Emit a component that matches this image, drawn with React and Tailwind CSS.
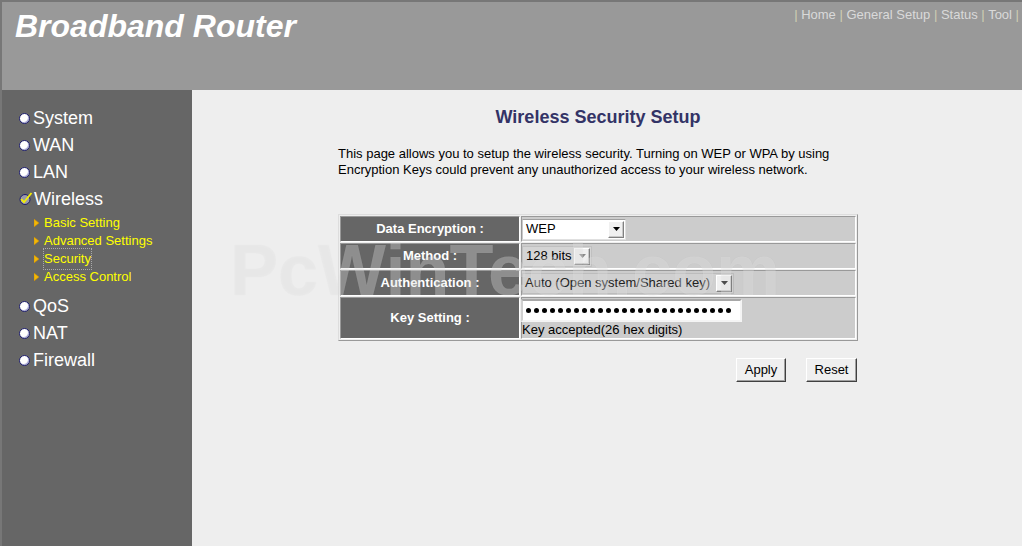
function Bullet() {
  return (
    <span className="w-[11px] h-[11px] rounded-full bg-white border border-[#1c1c6c] shadow-[inset_-1px_-1px_0_#b0b0d8] shrink-0" />
  );
}

function CheckBullet() {
  return (
    <svg width="14" height="14" viewBox="0 0 14 14" className="shrink-0 -mr-[2px] -mt-[3px]">
      <circle cx="6" cy="8.5" r="5" fill="#9a9aa8" stroke="#1c1c6c" strokeWidth="1" />
      <path d="M2.2 8.2 L5 11.2 L12.5 2" fill="none" stroke="#f5f000" strokeWidth="1.8" />
    </svg>
  );
}

function SubArrow() {
  return (
    <svg width="5" height="8" viewBox="0 0 5 8" className="shrink-0">
      <polygon points="0,0 5,4 0,8" fill="#f2b707" stroke="#c88a00" strokeWidth="0.5" />
    </svg>
  );
}

function MainItem({ label, check }) {
  return (
    <div className="h-[27px] flex items-center pl-[17px] gap-[3px] text-[18px] text-white">
      {check ? <CheckBullet /> : <Bullet />}
      <span>{label}</span>
    </div>
  );
}

function SubItem({ label, focus }) {
  return (
    <div className="h-[18px] flex items-center pl-[32px] gap-[5px] text-[13px] text-[#ffff00]">
      <SubArrow />
      <span className={focus ? "outline outline-1 outline-dotted outline-[#aaaaaa]" : ""}>{label}</span>
    </div>
  );
}

function DropButton({ dim }) {
  return (
    <span className="w-[16px] h-[17px] mr-[1px] flex items-center justify-center bg-[#f0f0f0] border border-t-white border-l-white border-b-[#808080] border-r-[#808080] shadow-[inset_-1px_-1px_0_#c8c8c8]">
      <svg width="7" height="4" viewBox="0 0 7 4">
        <polygon points="0,0 7,0 3.5,4" fill={dim ? "#8a8a8a" : "#000000"} />
      </svg>
    </span>
  );
}

export default function App() {
  return (
    <div className="relative w-[1022px] h-[546px] overflow-hidden flex flex-col bg-[#eeeeee] font-['Liberation_Sans',Arial,sans-serif]">
      <header className="h-[90px] shrink-0 bg-[#999999] border-t-2 border-l-2 border-[#777777] flex justify-between">
        <h1 className="pl-[13px] pt-[8px] text-[32px] leading-none font-bold italic text-white">Broadband Router</h1>
        <nav className="pt-[5px] pr-[3px] text-[13px] leading-[16px] text-[#d9d9d9] whitespace-pre">
          <span className="text-[#cfcfb4]">|</span> Home <span className="text-[#cfcfb4]">|</span> General Setup{" "}
          <span className="text-[#cfcfb4]">|</span> Status <span className="text-[#cfcfb4]">|</span> Tool{" "}
          <span className="text-[#cfcfb4]">|</span>
        </nav>
      </header>

      <div className="flex flex-1">
        <aside className="w-[192px] shrink-0 bg-[#666666] border-l-2 border-[#777777] pt-[15px]">
          <MainItem label="System" />
          <MainItem label="WAN" />
          <MainItem label="LAN" />
          <MainItem label="Wireless" check />
          <div className="pt-[1px]">
            <SubItem label="Basic Setting" />
            <SubItem label="Advanced Settings" />
            <SubItem label="Security" focus />
            <SubItem label="Access Control" />
          </div>
          <div className="mt-[7px]">
            <MainItem label="QoS" />
            <MainItem label="NAT" />
            <MainItem label="Firewall" />
          </div>
        </aside>

        <main className="flex-1 pt-[16px] pl-[146px]">
          <div className="w-[520px]">
            <h2 className="text-center text-[18px] leading-[22px] font-bold text-[#333366]">Wireless Security Setup</h2>
            <p className="mt-[18px] text-[13px] leading-[16px] text-black">
              This page allows you to setup the wireless security. Turning on WEP or WPA by using Encryption Keys could
              prevent any unauthorized access to your wireless network.
            </p>

            <table className="mt-[36px] w-[520px] table-fixed border-separate border-spacing-[1px] border border-t-[#dddddd] border-l-[#dddddd] border-b-[#999999] border-r-[#999999]">
              <tbody>
                <tr>
                  <td className="w-[180px] p-0 bg-[#666666] border border-t-[#999999] border-l-[#999999] border-b-white border-r-white text-center text-[13px] font-bold text-white">
                    <div className="h-[24px] flex items-center justify-center">Data Encryption :</div>
                  </td>
                  <td className="p-0 bg-[#cccccc] border border-t-[#999999] border-l-[#999999] border-b-white border-r-white">
                    <div className="h-[24px] flex items-center">
                      <div className="w-[104px] h-[21px] flex items-center justify-between bg-white border border-t-[#a0a0a0] border-l-[#c8c8c8] border-b-[#e0e0e0] border-r-[#e0e0e0]">
                        <span className="pl-[3px] text-[13px] text-black">WEP</span>
                        <DropButton />
                      </div>
                    </div>
                  </td>
                </tr>
                <tr>
                  <td className="p-0 bg-[#666666] border border-t-[#999999] border-l-[#999999] border-b-white border-r-white text-center text-[13px] font-bold text-white">
                    <div className="h-[24px] flex items-center justify-center">Method :</div>
                  </td>
                  <td className="p-0 bg-[#cccccc] border border-t-[#999999] border-l-[#999999] border-b-white border-r-white">
                    <div className="h-[24px] flex items-center">
                      <div className="w-[70px] h-[21px] flex items-center justify-between bg-[#d4d4d4] border border-[#c0c0c0]">
                        <span className="pl-[3px] text-[13px] text-black">128 bits</span>
                        <DropButton dim />
                      </div>
                    </div>
                  </td>
                </tr>
                <tr>
                  <td className="p-0 bg-[#666666] border border-t-[#999999] border-l-[#999999] border-b-white border-r-white text-center text-[13px] font-bold text-white">
                    <div className="h-[24px] flex items-center justify-center">Authentication :</div>
                  </td>
                  <td className="p-0 bg-[#cccccc] border border-t-[#999999] border-l-[#999999] border-b-white border-r-white">
                    <div className="h-[24px] flex items-center">
                      <div className="w-[212px] h-[21px] flex items-center justify-between bg-[#d0d0d0] border border-[#bcbcbc]">
                        <span className="pl-[2px] text-[13px] text-[#222222] whitespace-nowrap">Auto (Open system/Shared key)</span>
                        <DropButton />
                      </div>
                    </div>
                  </td>
                </tr>
                <tr>
                  <td className="p-0 bg-[#666666] border border-t-[#999999] border-l-[#999999] border-b-white border-r-white text-center text-[13px] font-bold text-white">
                    <div className="h-[40px] flex items-center justify-center">Key Setting :</div>
                  </td>
                  <td className="p-0 bg-[#cccccc] border border-t-[#999999] border-l-[#999999] border-b-white border-r-white align-top">
                    <div className="h-[40px] flex flex-col pt-[1px]">
                      <div className="-ml-[1px] w-[221px] h-[23px] flex items-center gap-[3px] pl-[3px] bg-white border-2 border-t-[#a8a8a8] border-l-[#d0d0d0] border-b-[#f4f4f4] border-r-[#f4f4f4]">
                        {Array.from({ length: 26 }).map((_, i) => (
                          <span key={i} className="w-[5px] h-[5px] rounded-full bg-black shrink-0" />
                        ))}
                      </div>
                      <div className="text-[13px] leading-[15px] text-black">Key accepted(26 hex digits)</div>
                    </div>
                  </td>
                </tr>
              </tbody>
            </table>

            <div className="mt-[17px] flex justify-end gap-[20px] pr-[1px]">
              <button className="w-[50px] h-[24px] bg-[#efefef] text-[13px] text-black border border-t-white border-l-white border-b-[#404040] border-r-[#404040] shadow-[inset_-1px_-1px_0_#a0a0a0]">
                Apply
              </button>
              <button className="w-[51px] h-[24px] bg-[#efefef] text-[13px] text-black border border-t-white border-l-white border-b-[#404040] border-r-[#404040] shadow-[inset_-1px_-1px_0_#a0a0a0]">
                Reset
              </button>
            </div>
          </div>
        </main>
      </div>

      <div className="pointer-events-none absolute left-[230px] top-[234px] text-[72px] leading-none font-bold text-white/30 whitespace-nowrap [text-shadow:0_0_1px_rgba(0,0,0,0.07)]">
        PcWinTech.com
      </div>
    </div>
  );
}
